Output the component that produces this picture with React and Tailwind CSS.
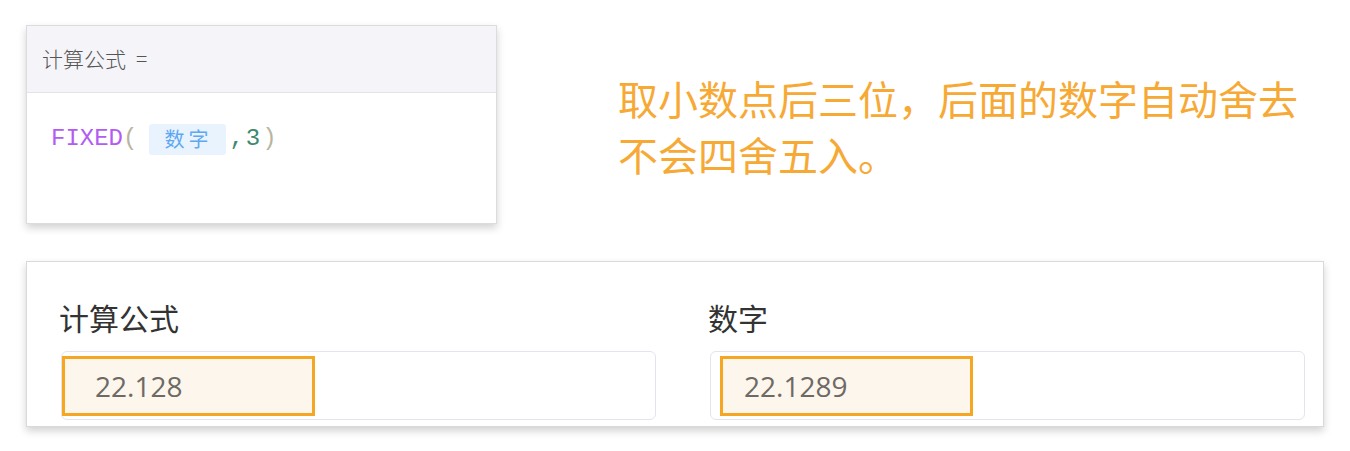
export default function App() {
  const cjk = { fontFamily: '"Noto Sans CJK SC", "Noto Sans", sans-serif' }
  const mono = { fontFamily: '"Liberation Mono", "DejaVu Sans Mono", monospace' }

  return (
    <div className="h-[451px] w-[1350px] overflow-hidden bg-white pl-[26px] pt-[25px]" style={cjk}>
      <div className="flex items-start">
        {/* formula card */}
        <div className="h-[199px] w-[471px] shrink-0 border border-[#dcdcdc] bg-white shadow-[0_4px_8px_rgba(0,0,0,0.18)]">
          <div className="flex h-[67px] items-center border-b border-[#e3e3ea] bg-[#f4f4f9] pl-[15px] text-[21px] font-light text-[#555]">
            计算公式<span className="ml-[10px]">=</span>
          </div>
          <div className="mt-[30px] flex h-[32px] items-center pl-[24px] text-[24px]" style={mono}>
            <span className="text-[#b35cf2]">FIXED</span>
            <span className="text-[#b8b59e]">(</span>
            <span
              className="ml-[12px] flex h-[31px] items-center rounded-[3px] bg-[#e9f3fe] pl-[15px] pr-[14px] text-[20px] tracking-[4px] text-[#5ea8f2]"
              style={cjk}
            >
              数字
            </span>
            <span className="ml-[3px] tracking-[2px] text-[#3f8a6f]">,3</span>
            <span className="text-[#b8b59e]">)</span>
          </div>
        </div>

        {/* note */}
        <div className="ml-[121px] mt-[45px] text-[40px] leading-[56px] text-[#f7a935]">
          <div>取小数点后三位，后面的数字自动舍去</div>
          <div>不会四舍五入。</div>
        </div>
      </div>

      {/* form preview */}
      <div className="mt-[37px] h-[166px] w-[1298px] border border-[#d9d9d9] bg-white pl-[34px] pr-[18px] pt-[35px] shadow-[0_4px_8px_rgba(0,0,0,0.18)]">
        <div className="grid grid-cols-2 gap-[54px]">
          <Field label="计算公式" value="22.128" hl="left-[0px]" />
          <Field label="数字" value="22.1289" hl="left-[9px]" />
        </div>
      </div>
    </div>
  )
}

function Field({ label, value, hl }) {
  return (
    <div>
      <div className="-ml-[2px] h-[40px] text-[30px] leading-[40px] text-[#333]">{label}</div>
      <div className="relative mt-[14px] h-[69px] rounded-[6px] border border-[#e4e4ee] bg-white">
        <div className={`absolute top-[4px] h-[60px] w-[253px] border-[3px] border-[#f5a623] bg-[#fdf6ec] ${hl}`} />
        <div
          className="relative flex h-full items-center pl-[33px] text-[28px] text-[#6d6965]"
          style={{ fontFamily: '"Open Sans", "Noto Sans", sans-serif' }}
        >
          {value}
        </div>
      </div>
    </div>
  )
}
